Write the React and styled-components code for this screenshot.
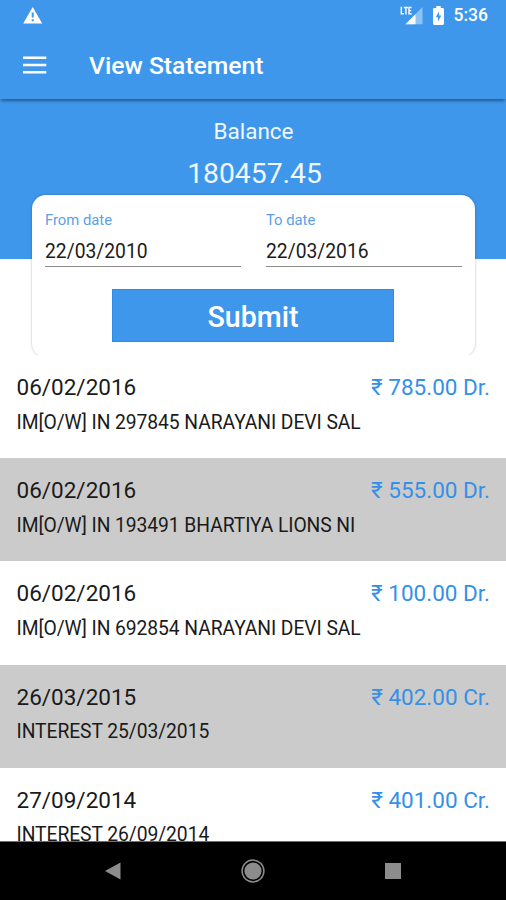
import styled, { createGlobalStyle } from 'styled-components';

const transactions = [
  { date: '06/02/2016', amount: '₹ 785.00 Dr.', detail: 'IM[O/W] IN 297845 NARAYANI DEVI SAL' },
  { date: '06/02/2016', amount: '₹ 555.00 Dr.', detail: 'IM[O/W] IN 193491 BHARTIYA LIONS NI' },
  { date: '06/02/2016', amount: '₹ 100.00 Dr.', detail: 'IM[O/W] IN 692854 NARAYANI DEVI SAL' },
  { date: '26/03/2015', amount: '₹ 402.00 Cr.', detail: 'INTEREST 25/03/2015' },
  { date: '27/09/2014', amount: '₹ 401.00 Cr.', detail: 'INTEREST 26/09/2014' },
];

const App = () => (
  <Screen>
    <GlobalStyle />
    <StatusBar>
      <WarningIcon />
      <StatusRight>
        <SignalIcon />
        <BatteryIcon />
        <Clock>5:36</Clock>
      </StatusRight>
    </StatusBar>

    <Toolbar>
      <MenuIcon />
      <Title>View Statement</Title>
    </Toolbar>

    <Balance>
      <BalanceLabel>Balance</BalanceLabel>
      <BalanceAmount>180457.45</BalanceAmount>
    </Balance>

    <FilterCard>
      <Fields>
        <DateField label='From date' value='22/03/2010' />
        <DateField label='To date' value='22/03/2016' />
      </Fields>
      <SubmitButton>Submit</SubmitButton>
    </FilterCard>

    <List>
      {transactions.map((item, index) => (
        <Row key={item.detail} $shaded={index % 2 === 1}>
          <RowTop>
            <RowDate>{item.date}</RowDate>
            <RowAmount>{item.amount}</RowAmount>
          </RowTop>
          <Detail>{item.detail}</Detail>
        </Row>
      ))}
    </List>

    <NavBar>
      <svg width='16' height='18' viewBox='0 0 16 18'>
        <path d='M0 9 L15.5 .5 V17.5 Z' fill='#8c8c8c' />
      </svg>
      <svg width='24' height='24' viewBox='0 0 24 24'>
        <circle cx='12' cy='12' r='10.9' fill='none' stroke='#8c8c8c' strokeWidth='1.5' />
        <circle cx='12' cy='12' r='8.6' fill='#8c8c8c' />
      </svg>
      <svg width='16' height='16' viewBox='0 0 16 16'>
        <rect width='16' height='16' fill='#8c8c8c' />
      </svg>
    </NavBar>
  </Screen>
);

const DateField = ({ label, value }) => (
  <Field>
    <FieldLabel>{label}</FieldLabel>
    <FieldValue>{value}</FieldValue>
  </Field>
);

const WarningIcon = () => (
  <svg width='20' height='17' viewBox='0 0 20 17'>
    <path d='M9.7 0 L19.2 16.5 H.2 Z' fill='#fff' />
    <path d='M8.7 5.6 h2 v5 h-2 z M8.7 12.2 h2 v2 h-2 z' fill='#3f97ec' />
  </svg>
);

const SignalIcon = () => (
  <svg width='23' height='19' viewBox='0 0 23 19'>
    <path d='M22.5 1 V18.3 H5.5 Z' fill='#fff' opacity='.42' />
    <path d='M15.5 8.2 V18.3 H5.5 Z' fill='#fff' />
    <path d='M0 0 H12.5 V9.3 H0 Z' fill='#3f97ec' />
    <path
      d='M1.3 .8 V7.8 H4 M3.8 1.5 H8 M5.9 1.5 V8.4 M11.6 1.5 H9 V7.8 H11.6 M9 4.6 H11.2'
      fill='none'
      stroke='#fff'
      strokeWidth='1.4'
    />
  </svg>
);

const BatteryIcon = () => (
  <svg width='11' height='19' viewBox='0 0 11 19'>
    <path
      d='M3.3 0 H7.7 V2 H9.7 Q11 2 11 3.3 V17.6 Q11 19 9.7 19 H1.3 Q0 19 0 17.6 V3.3 Q0 2 1.3 2 H3.3 Z'
      fill='#fff'
    />
    <path d='M6.1 5.2 L2.8 11.2 H5 V15.6 L8.3 9.5 H6.1 Z' fill='#3f97ec' />
  </svg>
);

const MenuIcon = () => (
  <svg width='24' height='18' viewBox='0 0 24 18'>
    <path d='M0 1.7 H23.3 M0 9 H23.3 M0 16.3 H23.3' stroke='#fff' strokeWidth='2.5' />
  </svg>
);

const GlobalStyle = createGlobalStyle`
  * {
    box-sizing: border-box;
  }

  body {
    margin: 0;
    background: #fff;
    font-family: Roboto, 'Noto Sans', sans-serif;
  }

  svg {
    display: block;
    flex-shrink: 0;
  }
`;

const Screen = styled.main`
  display: flex;
  flex-direction: column;
  width: 506px;
  height: 900px;
  overflow: hidden;
  background: #fff;
`;

const StatusBar = styled.div`
  display: flex;
  flex-shrink: 0;
  align-items: center;
  justify-content: space-between;
  height: 31px;
  padding: 0 18px 0 23px;
  background: #3f97ec;
`;

const StatusRight = styled.div`
  display: flex;
  align-items: center;
  gap: 10px;
`;

const Clock = styled.span`
  color: #fff;
  font-size: 17.5px;
  font-weight: 500;
  line-height: 31px;
`;

const Toolbar = styled.header`
  position: relative;
  display: flex;
  flex-shrink: 0;
  align-items: center;
  gap: 42px;
  height: 68px;
  padding: 0 23px;
  background: #3f97ec;
  box-shadow: 0 3px 3px -1px rgba(0, 0, 0, 0.4);
`;

const Title = styled.h1`
  margin: 2px 0 0;
  color: #fff;
  font-size: 24.7px;
  font-weight: 500;
  line-height: 30px;
`;

const Balance = styled.section`
  flex-shrink: 0;
  height: 160px;
  padding-top: 17px;
  background: #3f97ec;
  color: #f0f7ff;
  text-align: center;
`;

const BalanceLabel = styled.div`
  padding-left: 1px;
  font-size: 22.5px;
  line-height: 30px;
`;

const BalanceAmount = styled.div`
  margin-top: 9px;
  padding-left: 3px;
  font-size: 28.3px;
  line-height: 38px;
`;

const FilterCard = styled.section`
  display: flex;
  flex-direction: column;
  flex-shrink: 0;
  align-items: center;
  width: 443px;
  height: 162px;
  margin: -64px 0 -2px 32px;
  padding: 14px 13px 0;
  background: #fff;
  border-radius: 14px;
  box-shadow: 0 0 2px 1px rgba(0, 0, 0, 0.13);
`;

const Fields = styled.div`
  display: grid;
  grid-template-columns: 1fr 1fr;
  gap: 25px;
  width: 100%;
`;

const Field = styled.div`
  height: 58px;
  border-bottom: 1px solid #8d8d8d;
`;

const FieldLabel = styled.div`
  color: #5b9fe9;
  font-size: 14.8px;
  line-height: 22px;
`;

const FieldValue = styled.div`
  margin-top: 8px;
  color: #1c1c1c;
  font-size: 19.3px;
  line-height: 26px;
`;

const SubmitButton = styled.button`
  width: 282px;
  height: 53px;
  margin: 22px 1px 0 0;
  padding: 3px 0 0;
  border: 1px solid #2a8de6;
  background: #3f97ec;
  color: #fff;
  font-family: inherit;
  font-size: 28.6px;
  font-weight: 500;
`;

const List = styled.div`
  position: relative;
  flex: 1;
  overflow: hidden;
  background: #fff;
`;

const Row = styled.div`
  height: 103.2px;
  padding: 17px 16px 0 16.5px;
  background: ${({ $shaded }) => ($shaded ? '#cbcbcb' : '#fff')};
`;

const RowTop = styled.div`
  display: flex;
  justify-content: space-between;
  font-size: 22.5px;
  line-height: 30px;
`;

const RowDate = styled.span`
  color: #1a1a1a;
`;

const RowAmount = styled.span`
  color: #3490e8;
`;

const Detail = styled.div`
  margin-top: 7.6px;
  color: #1a1a1a;
  font-size: 19.3px;
  line-height: 26px;
  letter-spacing: -0.07px;
  white-space: nowrap;
`;

const NavBar = styled.nav`
  display: flex;
  flex-shrink: 0;
  align-items: center;
  justify-content: space-between;
  height: 59px;
  padding: 0 105px;
  border-top: 1px solid #6f6f6f;
  background: #000;
`;

export default App;
